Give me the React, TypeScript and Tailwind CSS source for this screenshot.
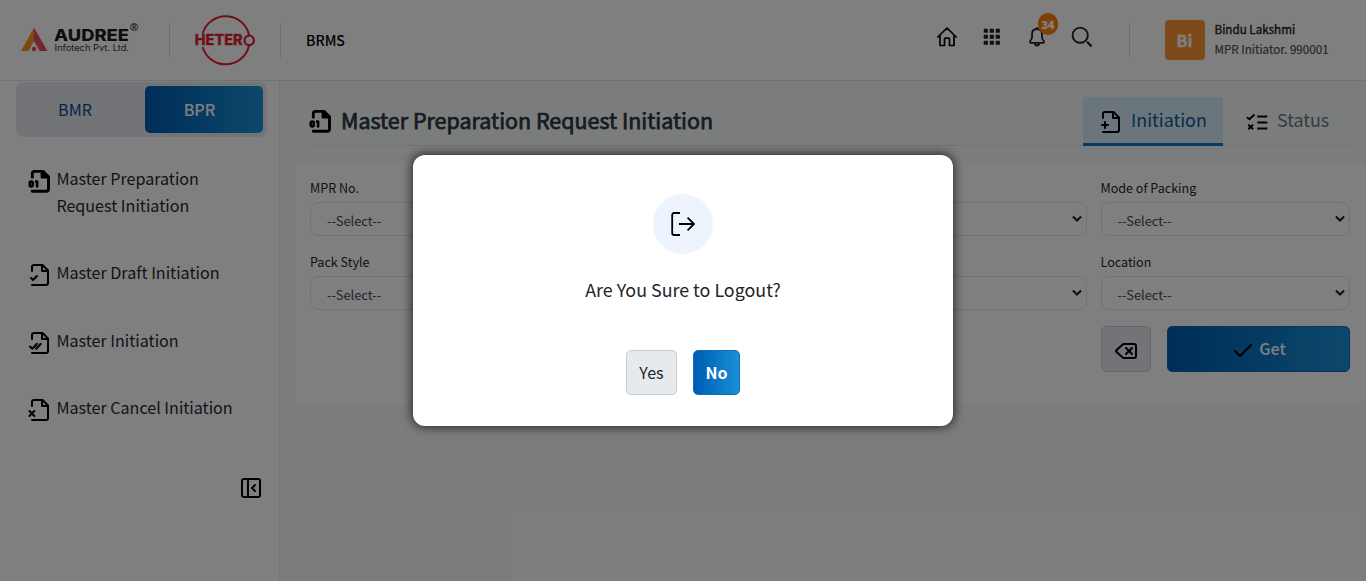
import type { ReactNode } from 'react';
import { Check, Delete, PanelLeftClose } from 'lucide-react';

function PageIcon({ children }: { children: ReactNode }) {
  return (
    <svg width="24" height="24" viewBox="0 0 24 24" fill="none" stroke="#000" strokeWidth="2" strokeLinecap="round" strokeLinejoin="round" className="shrink-0 overflow-visible">
      <path d="M4 22h14a2 2 0 0 0 2-2V7.5L14.5 2H6a2 2 0 0 0-2 2v4" />
      <path d="M14 2v6h6" />
      {children}
    </svg>
  );
}

function DigitIcon() {
  return (
    <svg width="24" height="24" viewBox="0 0 24 24" fill="none" stroke="#000" strokeWidth="2.9" strokeLinecap="round" strokeLinejoin="round" className="shrink-0 overflow-visible">
      <path d="M4.3 22.2h14a2.2 2.2 0 0 0 2.2-2.2V7.8L15 2.4H6.5a2.2 2.2 0 0 0-2.2 2.2v3.6" />
      <path d="M13.6 2.8v5.8h6z" fill="#000" strokeWidth="2" />
      <rect x="1.7" y="12.6" width="3" height="4.8" rx="1.5" strokeWidth="2.5" />
      <path d="M8 12.6h1.1v4.8" strokeWidth="2.6" />
    </svg>
  );
}

function AudreeLogo() {
  return (
    <svg width="120" height="34" viewBox="20 22 120 34">
      <path d="M34 28.8V42L28.5 52H21z" fill="#f7941d" />
      <path d="M34 28.8 47.5 52H39.6L34 42z" fill="#e84a5f" />
      <circle cx="34" cy="50" r="2.3" fill="#e84a5f" />
      <text x="54" y="41.6" textLength="75" lengthAdjust="spacingAndGlyphs" fontSize="16" fontWeight="800" fontFamily="Inter, sans-serif" fill="#1d1d1f">AUDREE</text>
      <text x="54.5" y="52.2" textLength="74.5" lengthAdjust="spacingAndGlyphs" fontSize="9" fontWeight="400" fontFamily="Inter, sans-serif" fill="#333">Infotech Pvt. Ltd.</text>
      <text x="129.7" y="32" fontSize="10.4" fontWeight="600" fontFamily="'Noto Sans', sans-serif" fill="#1d1d1f">®</text>
    </svg>
  );
}

function HeteroLogo() {
  return (
    <svg width="62" height="52" viewBox="194 14 62 52" fill="none" stroke="#e31e35" strokeWidth="2">
      <path d="M202.6 33.5A24 24 0 0 1 249.2 35.7" />
      <path d="M202.6 47A24 24 0 0 0 249.2 45" />
      <circle cx="249.2" cy="40.4" r="4.7" strokeWidth="2.3" />
      <text x="194.8" y="45.4" textLength="47.8" lengthAdjust="spacingAndGlyphs" fontSize="14" fontWeight="800" fontFamily="Inter, sans-serif" fill="#e31e35" strokeWidth="0.3">HETER</text>
    </svg>
  );
}

const Divider = () => <div className="h-[35px] w-px bg-[#d9dde2]" />;

function Header() {
  return (
    <header className="flex h-[81px] shrink-0 items-center border-b border-[#dfe4e6] bg-white pl-5">
      <div className="mb-1 h-[34px] w-[120px]"><AudreeLogo /></div>
      <div className="ml-[29px]"><Divider /></div>
      <div className="ml-6"><HeteroLogo /></div>
      <div className="ml-6"><Divider /></div>
      <div className="ml-[25px] text-[14.1px] leading-5 font-medium text-black">BRMS</div>
      <div className="ml-auto flex items-center">
        <svg width="22" height="22" viewBox="0 0 22 22" fill="none" stroke="#000" strokeWidth="1.7" strokeLinejoin="round" strokeLinecap="round" className="mr-px mb-1.5">
          <path d="M1.8 11 11 2l9.2 9M4 9.5V19.5H8.5V13.2a1 1 0 0 1 1-1h3a1 1 0 0 1 1 1v6.3H18V9.5" />
        </svg>
        <svg width="18" height="18" viewBox="0 0 18 18" fill="#222" className="mb-1.5 ml-6">
          {[1, 7, 13].map((y) => [1, 7, 13].map((x) => <rect key={`${x}-${y}`} x={x - 0.3} y={y - 0.2} width="4.2" height="4" rx="0.6" />))}
        </svg>
        <div className="relative mb-1.5 ml-[27px] h-[22px] w-[18px]">
          <svg width="18" height="22" viewBox="0 0 18 22" fill="none" stroke="#222" strokeWidth="1.8" strokeLinejoin="round">
            <path d="M9 1.2v1.6M9 3C5.6 3 4 5.6 4 8.4v3.4c0 1.4-2 2.6-2 4.2 0 .6.4.9 1 .9h12c.6 0 1-.3 1-.9 0-1.6-2-2.8-2-4.2V8.4C14 5.6 12.4 3 9 3z" />
            <path d="M6.8 17.5c.2 1.4 1 2 2.2 2s2-.6 2.2-2" />
          </svg>
          <span className="absolute -top-[13px] left-[10px] flex h-[22px] w-5 items-center justify-center rounded-full bg-[#fb7f05] pt-px text-[11px] font-bold text-white [-webkit-text-stroke:0.4px]">34</span>
        </div>
        <svg width="22" height="22" viewBox="0 0 22 22" fill="none" stroke="#222" strokeWidth="1.9" className="mb-1.5 ml-[25px]">
          <circle cx="9.2" cy="9.2" r="7.6" />
          <path d="m16 15.8 4.6 4.6" strokeWidth="2.2" />
        </svg>
        <div className="ml-9"><Divider /></div>
        <div className="ml-[35px] flex size-10 items-center justify-center rounded bg-[#fb9532] pr-px text-[16px] font-bold text-white [-webkit-text-stroke:0.4px]">Bi</div>
        <div className="-mt-[2px] ml-[9.5px] w-[151.5px] whitespace-nowrap">
          <div className="text-[11.65px] leading-5 text-[#23272e] [-webkit-text-stroke:0.4px]">Bindu Lakshmi</div>
          <div className="text-[11.65px] leading-5 text-[#4d5258] [-webkit-text-stroke:0.2px]">MPR Initiator. 990001</div>
        </div>
      </div>
    </header>
  );
}

function NavItem({ icon, children }: { icon: ReactNode; children: ReactNode }) {
  return (
    <li className="flex items-start gap-[4.4px]">
      <span className="mt-1 -mb-2">{icon}</span>
      <span className="text-[16.1px] leading-[27px] text-[#222831]">{children}</span>
    </li>
  );
}

function Sidebar() {
  return (
    <aside className="w-[280px] shrink-0 border-r border-[#e2ebe9] bg-white pt-px pl-4">
      <div className="flex h-[55px] w-[251px] rounded-lg bg-[#e4e9f0] p-1 text-[16.1px]">
        <div className="flex w-[110px] items-center justify-center text-[#0b4a8f]">BMR</div>
        <div className="ml-[15px] flex w-[118px] items-center justify-center rounded-[5px] bg-linear-to-r from-[#005cb2] to-[#1a90d8] pr-[9px] font-medium text-white">BPR</div>
      </div>
      <ul className="mt-7 flex flex-col gap-[40.4px] pl-3">
        <NavItem icon={<DigitIcon />}>Master Preparation<br />Request Initiation</NavItem>
        <NavItem icon={<PageIcon><path d="m3 15 2 2 4-4" /></PageIcon>}>Master Draft Initiation</NavItem>
        <NavItem icon={<PageIcon><path d="m2 15.5 2.4 2.3 4.6-5M8.2 17.8l4.6-5" /></PageIcon>}>Master Initiation</NavItem>
        <NavItem icon={<PageIcon><path d="m1.4 13 5 5M6.4 13l-5 5" /></PageIcon>}>Master Cancel Initiation</NavItem>
      </ul>
      <div className="mt-[54.8px] ml-[223px]"><PanelLeftClose size={24} color="#000" /></div>
    </aside>
  );
}

function Field({ label, placeholder }: { label?: string; placeholder?: string }) {
  return (
    <div>
      <div className="h-[27px] text-[12.55px] leading-[26px] text-[#1f242b]">{label}</div>
      <div className="flex h-[34px] items-center justify-between rounded-lg border border-[#e3e5e8] bg-white pr-1 pl-4 text-[12.9px] text-[#444a54]">
        <span className="pt-[3px] leading-5">{placeholder}</span>
        <svg width="10" height="8" viewBox="0 0 10 8" fill="none" stroke="#222" strokeWidth="2.1"><path d="M.9 1.4 5 5.5l4.1-4.1" /></svg>
      </div>
    </div>
  );
}

function Main() {
  return (
    <main className="flex-1 bg-[#f6fbfa] pt-4 pl-[15px]">
      <div className="mr-[15px] ml-[14px] flex h-[49px] items-center border-b border-[#e3e9e9]">
        <DigitIcon />
        <h1 className="mb-0.5 ml-2 text-[21.47px] leading-8 font-normal text-[#2f3746] [-webkit-text-stroke:0.75px]">Master Preparation Request Initiation</h1>
        <div className="-mb-px ml-auto flex h-[49px] w-[140px] items-center gap-2 border-b-3 border-[#1377c6] bg-[#d5ebf8] pl-4 text-[17.86px] text-[#0f5a96]">
          <span className="mt-[3px]"><PageIcon><path d="M3 15h6M6 12v6" /></PageIcon></span>
          <span className="mb-0.5">Initiation</span>
        </div>
        <div className="flex w-[128px] items-center gap-[9px] pl-[23px] text-[17.86px] text-[#6b7280]">
          <svg width="22" height="18" viewBox="0 0 22 18" fill="none" stroke="#000" strokeWidth="2" className="mt-px">
            <path d="M11.3 3.5h10M11.3 9.5h10M11.3 15.5h10M1 4.2l2.4 2L8.5 1.6M2.3 11.6l4.8 4.6M7.1 11.6l-4.8 4.6" />
          </svg>
          <span className="mb-[3px]">Status</span>
        </div>
      </div>
      <section className="mt-4 h-[242px] rounded-md bg-white pt-[13px] pr-4 pl-[15px]">
        <div className="grid grid-cols-4 gap-x-[14px] gap-y-[13px]">
          <Field label="MPR No." placeholder="--Select--" />
          <Field />
          <Field />
          <Field label="Mode of Packing" placeholder="--Select--" />
          <Field label="Pack Style" placeholder="--Select--" />
          <Field />
          <Field />
          <Field label="Location" placeholder="--Select--" />
        </div>
        <div className="mt-4 flex justify-end gap-4">
          <div className="flex h-[46px] w-[50px] items-center justify-center rounded-[5px] border border-[#c9cdd3] bg-[#e6e9ee] pt-1"><Delete size={24} color="#000" /></div>
          <div className="flex h-[46px] w-[183px] items-center justify-center gap-1 rounded-[5px] border border-[#0f6cb8] bg-linear-to-r from-[#005cb2] to-[#1a90d8] text-[16.1px] font-medium text-white">
            <Check size={24} color="#000" className="mt-1" />
            <span className="mb-0.5">Get</span>
          </div>
        </div>
      </section>
    </main>
  );
}

function LogoutDialog() {
  return (
    <div className="absolute inset-0 flex items-start justify-center bg-black/50 pt-[155px]">
      <div role="dialog" className="flex h-[271px] w-[540px] flex-col items-center rounded-xl bg-white pt-[39px] shadow-[0_0_10px_2px_rgba(0,0,0,0.6)]">
        <div className="flex size-[60px] items-center justify-center rounded-full bg-[#edf4fd]">
          <svg width="26" height="26" viewBox="0 0 26 26" fill="none" stroke="#000" strokeWidth="1.8">
            <path d="M10 2H4.2A1.8 1.8 0 0 0 2.2 4v18a1.8 1.8 0 0 0 1.8 2H10M9 13H24M17.6 6.6l6.4 6.4-6.4 6.4" />
          </svg>
        </div>
        <p className="mt-5 text-[17.86px] leading-[30px] text-[#212529]">Are You Sure to Logout?</p>
        <div className="mt-[46px] flex gap-4 text-[16.1px]">
          <button className="h-[45px] w-[51px] rounded-[5px] border border-[#c9cdd3] bg-[#e6e9ee] text-[#212529]">Yes</button>
          <button className="h-[45px] w-[47px] rounded-[5px] border border-[#0f6cb8] bg-linear-to-r from-[#005cb2] to-[#1a90d8] font-bold text-white">No</button>
        </div>
      </div>
    </div>
  );
}

export default function App() {
  return (
    <div className="relative flex h-[581px] w-[1366px] flex-col overflow-hidden bg-white font-['Noto_Sans_CJK_SC','Noto_Sans',sans-serif]">
      <Header />
      <div className="flex flex-1">
        <Sidebar />
        <Main />
      </div>
      <LogoutDialog />
    </div>
  );
}
